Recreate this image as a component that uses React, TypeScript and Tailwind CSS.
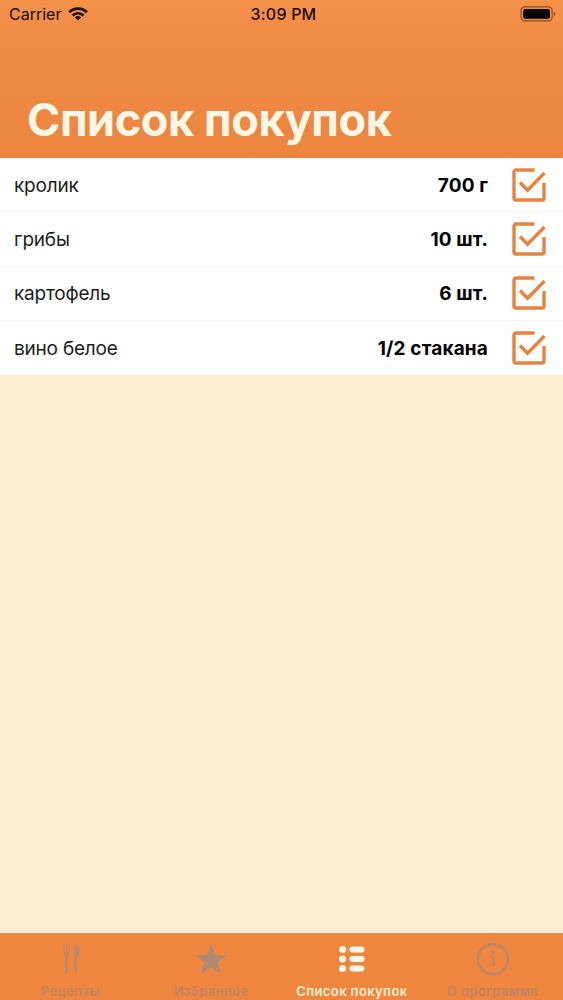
import type { ReactNode } from "react";

const items = [
  { name: "кролик", amount: "700 г" },
  { name: "грибы", amount: "10 шт." },
  { name: "картофель", amount: "6 шт." },
  { name: "вино белое", amount: "1/2 стакана" },
];

function WifiIcon() {
  return (
    <svg width="20" height="14" viewBox="0 0 20 14" fill="none" stroke="#200b02" strokeWidth="2.7">
      <path d="M1.2 5.2a12.6 12.6 0 0 1 17.6 0" />
      <path d="M4.5 8.5a7.9 7.9 0 0 1 11 0" />
      <path d="M10 13.6 6.9 10.4a4.5 4.5 0 0 1 6.2 0z" fill="#200b02" stroke="none" />
    </svg>
  );
}

function BatteryIcon() {
  return (
    <svg width="36" height="16" viewBox="0 0 36 16">
      <rect x="1.1" y="0.9" width="31" height="14" rx="3.6" fill="none" stroke="#8f4e22" strokeWidth="1.2" />
      <rect x="3.2" y="3" width="26.8" height="9.8" rx="2" fill="#0a0200" />
      <path d="M33.6 5.6v4.8c1.1-.4 1.7-1.4 1.7-2.4s-.6-2-1.7-2.4z" fill="#9c5628" />
    </svg>
  );
}

function CheckIcon() {
  return (
    <svg width="34" height="34" viewBox="0 0 34 34" fill="none" stroke="#e48440" strokeWidth="3.4">
      <path d="M22.5 2H4a2 2 0 0 0-2 2v26a2 2 0 0 0 2 2h26a2 2 0 0 0 2-2V15" />
      <path d="m8 14.5 7.5 7.8L32.5 5" />
    </svg>
  );
}

function CutleryIcon() {
  return (
    <svg width="34" height="34" viewBox="0 0 34 34" fill="#b9886c">
      <path d="M10.6 2h1v8h1.2V2h1.4v8h1.2V2h1v9.5c0 1.6-.8 2.6-1.7 3V31a1.2 1.2 0 0 1-2.4 0V14.5c-.8-.4-1.7-1.400-1.7-3z" />
      <path d="M21.5 2c3.300 0 5 3.500 5 8 0 3-1.200 5-2.700 5.600V30a1.200 1.200 0 0 1-2.300 0z" />
    </svg>
  );
}

function StarIcon() {
  return (
    <svg width="34" height="34" viewBox="0 0 34 34" fill="#ae8a72">
      <path d="m17 1.5 4 11.4 12.200.2-9.700 7.300 3.500 11.600-10-6.900L7 32l3.500-11.600L.8 13.100l12.200-.2z" />
    </svg>
  );
}

function ListIcon() {
  return (
    <svg width="34" height="34" viewBox="0 0 34 34" fill="#fff8e6">
      {[7.4, 17, 26.6].map((y) => (
        <g key={y}>
          <circle cx="7.6" cy={y} r="3.5" />
          <rect x="14.5" y={y - 3} width="15" height="6" rx="3" />
        </g>
      ))}
    </svg>
  );
}

function InfoIcon() {
  return (
    <svg width="34" height="34" viewBox="0 0 34 34" fill="none" stroke="#b9886c">
      <circle cx="17" cy="17.2" r="15" strokeWidth="2.6" />
      <circle cx="17" cy="10.5" r="1.9" fill="#b9886c" stroke="none" />
      <path d="M14.5 15h2.9v10" strokeWidth="2.4" />
    </svg>
  );
}

function Tab({ icon, active, children }: { icon: ReactNode; active?: boolean; children: ReactNode }) {
  return (
    <a
      href="#"
      className={`flex flex-1 flex-col items-center pt-2 text-[13px] leading-[16px] tracking-[0.4px] whitespace-nowrap ${
        active ? "font-semibold text-[#ffedd1]" : "font-semibold text-[#c18560]"
      }`}
    >
      {icon}
      <span className="mt-[7px]">{children}</span>
    </a>
  );
}

export default function App() {
  return (
    <div className="flex h-[1000px] w-[563px] flex-col overflow-hidden bg-[#fcedd4] font-['Inter',sans-serif]">
      <header className="h-[158px] shrink-0 bg-linear-to-b from-[#f39049] via-[#ee8843] via-50% to-[#ec8540]">
        {/* Status bar */}
        <div className="grid h-[27px] grid-cols-3 items-center pr-[7px] pl-[9px] text-[16px] text-[#200b02]">
          <div className="flex items-center gap-[7px]">
            Carrier <WifiIcon />
          </div>
          <div className="pl-[2px] text-center font-medium tracking-[0.2px]">3:09 PM</div>
          <div className="flex justify-end">
            <BatteryIcon />
          </div>
        </div>
        <h1 className="mt-[65px] pl-[27px] text-[45px] leading-[56px] font-bold tracking-[-0.4px] whitespace-nowrap text-[#fff7e6]">
          Список покупок
        </h1>
      </header>

      {/* Shopping list */}
      <ul className="grid h-[217px] shrink-0 grid-rows-4 divide-y divide-[#f4f4f4] bg-white">
        {items.map((item) => (
          <li key={item.name} className="flex items-center pr-[17px] pl-[14px] text-[19px] text-[#1c1c1c]">
            <span className="flex-1 pt-[3px] tracking-[-0.2px]">{item.name}</span>
            <span className="mr-[24px] pt-[3px] font-bold tracking-[0.15px] text-black">{item.amount}</span>
            <CheckIcon />
          </li>
        ))}
      </ul>

      {/* Tab bar */}
      <nav className="mt-auto flex h-[67px] shrink-0 overflow-hidden border-t border-[#dd9358] bg-[#ee863f]">
        <Tab icon={<CutleryIcon />}>Рецепты</Tab>
        <Tab icon={<StarIcon />}>Избранное</Tab>
        <Tab icon={<ListIcon />} active>
          Список покупок
        </Tab>
        <Tab icon={<InfoIcon />}>О программе</Tab>
      </nav>
    </div>
  );
}
